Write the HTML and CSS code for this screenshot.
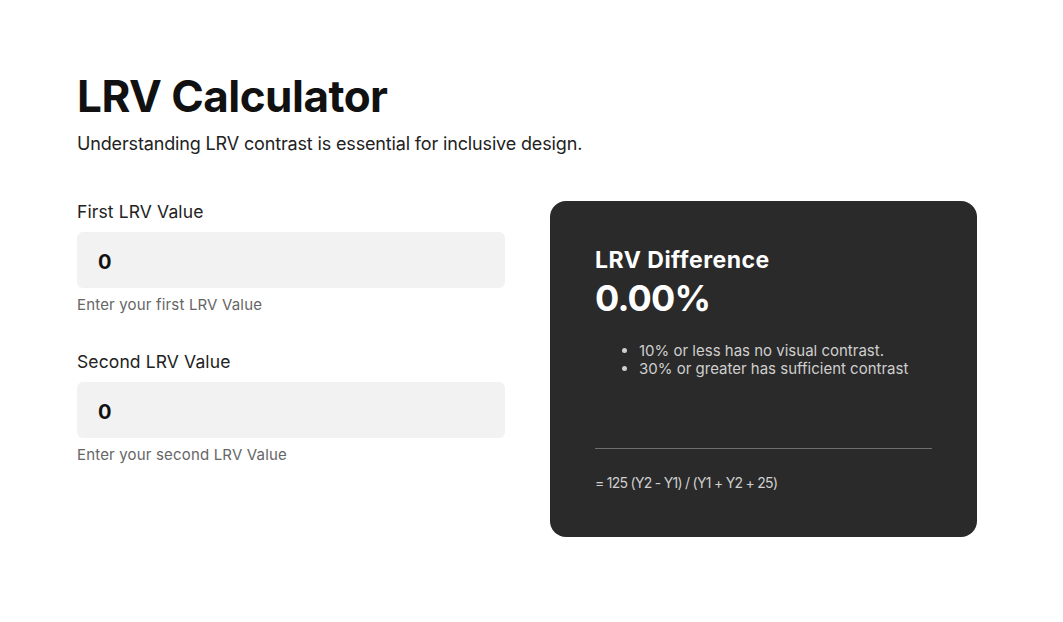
FILE: index.html
```html
<!DOCTYPE html>
<html lang="en">
<head>
<meta charset="utf-8">
<title>LRV Calculator</title>
<link rel="stylesheet" href="styles.css">
</head>
<body>
<main class="page">
  <header class="intro">
    <h1 class="title">LRV Calculator</h1>
    <p class="subtitle">Understanding LRV contrast is essential for inclusive design.</p>
  </header>
  <section class="calc">
    <div class="fields">
      <div class="field">
        <label class="field-label" for="lrv1">First LRV Value</label>
        <input class="field-input" id="lrv1" type="text" value="0">
        <p class="field-help">Enter your first LRV Value</p>
      </div>
      <div class="field">
        <label class="field-label" for="lrv2">Second LRV Value</label>
        <input class="field-input" id="lrv2" type="text" value="0">
        <p class="field-help">Enter your second LRV Value</p>
      </div>
    </div>
    <div class="result">
      <h2 class="result-title">LRV Difference</h2>
      <div class="result-value">0.00%</div>
      <ul class="result-notes">
        <li>10% or less has no visual contrast.</li>
        <li>30% or greater has sufficient contrast</li>
      </ul>
      <hr class="result-rule">
      <p class="result-formula">= 125 (Y2 - Y1) / (Y1 + Y2 + 25)</p>
    </div>
  </section>
</main>
</body>
</html>
```
FILE: styles.css
```css
* { box-sizing: border-box; }
html, body { margin: 0; padding: 0; background: #fff; }
body {
  font-family: Inter, "Open Sans", "DejaVu Sans", sans-serif;
  color: #1a1a1a;
}
.page {
  width: 900px;
  margin-left: 77px;
  padding-top: 70px;
}
.title {
  margin: 0;
  font-size: 44px;
  line-height: 53px;
  font-weight: 700;
  letter-spacing: -0.5px;
  color: #111;
}
.subtitle {
  margin: 9px 0 0;
  font-size: 18px;
  line-height: 24px;
  letter-spacing: -0.15px;
  color: #222;
}
.calc {
  display: grid;
  grid-template-columns: 428px 427px;
  column-gap: 45px;
  align-items: start;
  margin-top: 45px;
}
.fields {
  display: flex;
  flex-direction: column;
  gap: 36px;
}
.field { display: flex; flex-direction: column; }
.field-label {
  font-size: 17.5px;
  line-height: 22px;
  letter-spacing: 0.12px;
  color: #222;
}
.field-input {
  margin-top: 9px;
  height: 56px;
  border: 0;
  border-radius: 6px;
  background: #f2f2f2;
  padding: 3px 21px 0;
  font-family: inherit;
  font-size: 20px;
  font-weight: 700;
  color: #111;
  outline: none;
}
.field-help {
  margin: 7px 0 0;
  font-size: 15px;
  line-height: 20px;
  letter-spacing: 0.17px;
  color: #666;
}
.result {
  background: #2a2a2a;
  border-radius: 16px;
  padding: 45px;
  color: #fff;
}
.result-title {
  margin: 0;
  font-size: 23px;
  line-height: 28px;
  font-weight: 700;
  letter-spacing: 0.5px;
}
.result-value {
  margin-top: 2px;
  font-size: 36px;
  line-height: 44px;
  font-weight: 700;
  letter-spacing: -0.8px;
}
.result-notes {
  margin: 22px 0 0;
  padding-left: 44px;
  font-size: 15px;
  line-height: 18px;
  color: #cfcfcf;
}
.result-rule {
  margin: 70px 0 0;
  border: 0;
  border-top: 1px solid #6e6e6e;
  height: 0;
}
.result-formula {
  margin: 25px 0 0;
  font-size: 14px;
  line-height: 18px;
  letter-spacing: -0.72px;
  color: #cfcfcf;
}
```
